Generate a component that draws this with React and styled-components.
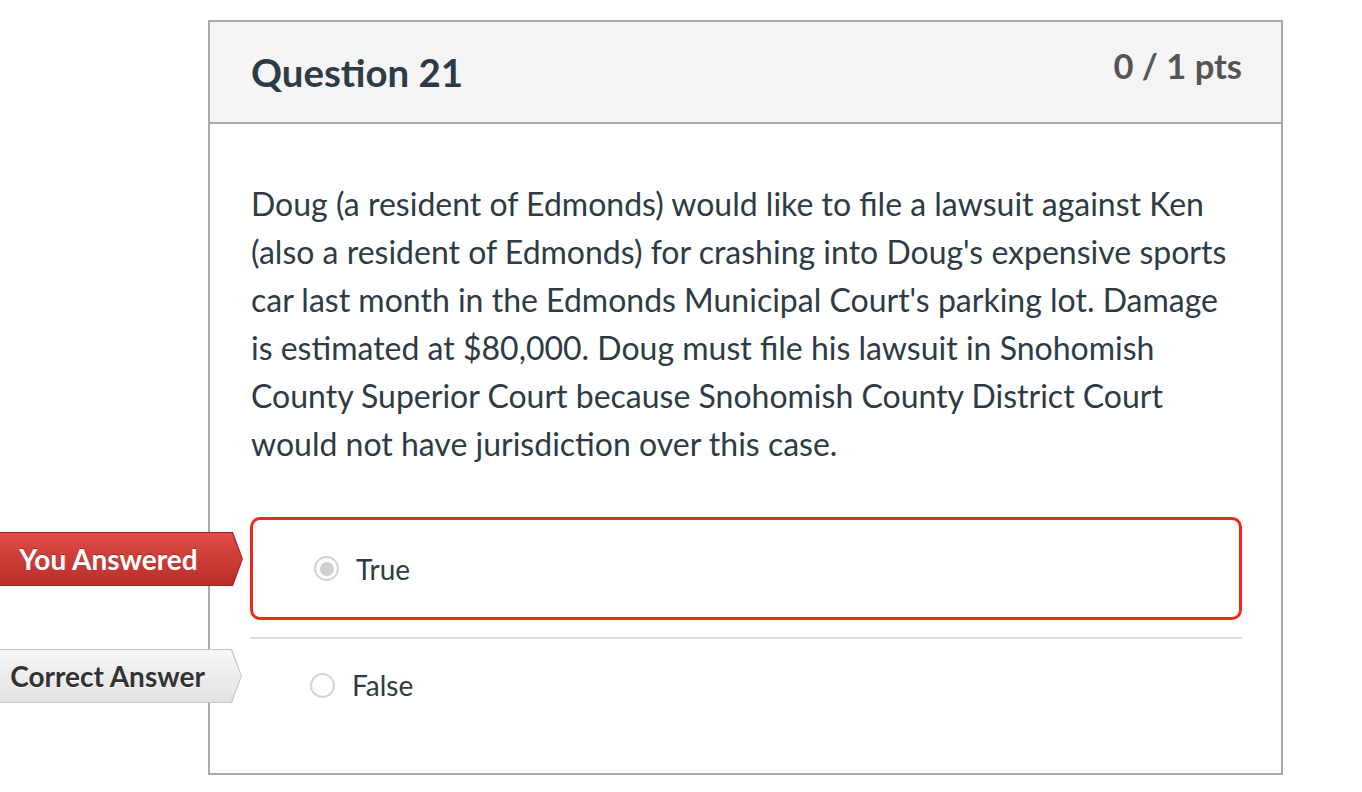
import styled, { createGlobalStyle } from 'styled-components';

const GlobalStyle = createGlobalStyle`
  html, body {
    margin: 0;
    padding: 0;
    background: #ffffff;
  }
  body {
    font-family: Lato, "Open Sans", "Liberation Sans", sans-serif;
    color: #2d3b45;
  }
`;

const Page = styled.div`
  padding: 20px 0 0 208px;
  width: 1362px;
  height: 792px;
  box-sizing: border-box;
`;

const Card = styled.div`
  width: 1075px;
  box-sizing: border-box;
  border: 2px solid #aaaaaa;
  background: #ffffff;
`;

const Header = styled.div`
  display: flex;
  justify-content: space-between;
  align-items: flex-start;
  height: 100px;
  padding: 0 39px 0 41px;
  background: #f5f5f5;
  border-bottom: 2px solid #aaaaaa;
`;

const Title = styled.h2`
  margin: 27px 0 0;
  font-size: 38.4px;
  line-height: 1.2;
  font-weight: 700;
  color: #2d3b45;
`;

const Points = styled.div`
  margin-top: 23px;
  font-size: 34.5px;
  line-height: 1.2;
  font-weight: 700;
  color: #555555;
`;

const Body = styled.div`
  padding: 56px 39px 42px 40px;
`;

const QuestionText = styled.p`
  margin: 0 0 49px 1px;
  font-size: 32px;
  line-height: 48px;
  color: #2d3b45;
`;

const Answer = styled.div`
  position: relative;
  display: flex;
  align-items: center;
  gap: 17px;
  box-sizing: border-box;
  ${({ $selected }) =>
    $selected
      ? `
    height: 103px;
    padding-left: 61px;
    border: 3px solid #f2281e;
    border-radius: 10px;
  `
      : `
    height: 94px;
    margin-top: 17px;
    padding-left: 60px;
    border-top: 2px solid #dddddd;
  `}
`;

const Radio = styled.span`
  width: 25px;
  height: 25px;
  box-sizing: border-box;
  border-radius: 50%;
  border: 2px solid #d4d4d4;
  background: #ffffff;
  display: flex;
  align-items: center;
  justify-content: center;
  &::after {
    content: '';
    width: 14px;
    height: 14px;
    border-radius: 50%;
    background: ${({ $checked }) => ($checked ? '#cfcfcf' : 'transparent')};
  }
`;

const AnswerText = styled.span`
  font-size: 28px;
  color: #2d3b45;
`;

const Flag = styled.div`
  position: absolute;
  right: calc(100% + ${({ $gap }) => $gap}px);
  top: ${({ $top }) => $top}px;
  width: 243px;
  height: 54px;
  padding: 1px 1px 1px 0;
  box-sizing: border-box;
  background: ${({ $tone }) => ($tone === 'red' ? '#a3241f' : '#c6c6c6')};
  clip-path: polygon(0 0, 233px 0, 100% 50%, 233px 100%, 0 100%);
`;

const FlagInner = styled.div`
  height: 100%;
  display: flex;
  align-items: center;
  justify-content: center;
  padding-right: 25px;
  box-sizing: border-box;
  clip-path: polygon(0 0, 232px 0, 100% 50%, 232px 100%, 0 100%);
  font-size: 28px;
  font-weight: 700;
  white-space: nowrap;
  ${({ $tone }) =>
    $tone === 'red'
      ? `
    background: linear-gradient(#df4c47, #b92e29);
    color: #ffffff;
    text-shadow: 0 -1px 0 rgba(0, 0, 0, 0.25);
  `
      : `
    background: linear-gradient(#f7f7f7, #e2e2e2);
    color: #333333;
    text-shadow: 0 1px 0 #ffffff;
  `}
`;

export default function App() {
  return (
    <>
      <GlobalStyle />
      <Page>
        <Card>
          <Header>
            <Title>Question 21</Title>
            <Points>0 / 1 pts</Points>
          </Header>
          <Body>
            <QuestionText>
              Doug (a resident of Edmonds) would like to file a lawsuit against Ken
              (also a resident of Edmonds) for crashing into Doug's expensive sports
              car last month in the Edmonds Municipal Court's parking lot. Damage is
              estimated at $80,000. Doug must file his lawsuit in Snohomish County
              Superior Court because Snohomish County District Court would not have
              jurisdiction over this case.
            </QuestionText>
            <Answer $selected>
              <Flag $tone="red" $gap={10} $top={12}>
                <FlagInner $tone="red">You Answered</FlagInner>
              </Flag>
              <Radio $checked />
              <AnswerText>True</AnswerText>
            </Answer>
            <Answer>
              <Flag $tone="grey" $gap={8} $top={10}>
                <FlagInner $tone="grey">Correct Answer</FlagInner>
              </Flag>
              <Radio />
              <AnswerText>False</AnswerText>
            </Answer>
          </Body>
        </Card>
      </Page>
    </>
  );
}
